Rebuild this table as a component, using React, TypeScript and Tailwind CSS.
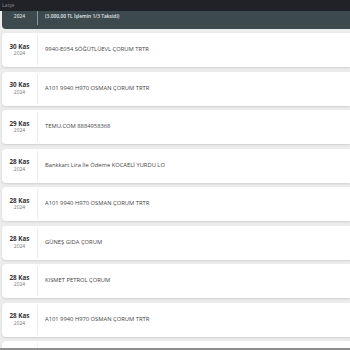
import React from "react";

const rows = [
  { d: "30 Kas", t: "9940-E054 SÖĞÜTLÜEVL ÇORUM TRTR" },
  { d: "30 Kas", t: "A101 9940 H970 OSMAN ÇORUM TRTR" },
  { d: "29 Kas", t: "TEMU.COM 8884958368" },
  { d: "28 Kas", t: "Bankkart Lira İle Ödeme KOCAELİ YURDU LO" },
  { d: "28 Kas", t: "A101 9940 H970 OSMAN ÇORUM TRTR" },
  { d: "28 Kas", t: "GÜNEŞ GIDA ÇORUM" },
  { d: "28 Kas", t: "KISMET PETROL ÇORUM" },
  { d: "28 Kas", t: "A101 9940 H970 OSMAN ÇORUM TRTR" },
];

export default function App() {
  return (
    <div
      className="relative w-[350px] h-[350px] overflow-hidden bg-[#ececec] flex flex-col"
      style={{ fontFamily: '"Open Sans", "Liberation Sans", sans-serif' }}
    >
      <div className="h-[11px] shrink-0 bg-[#202228] flex items-center px-[2px]">
        <span className="text-[5px] leading-none text-[#8a8c90]">Latşe</span>
      </div>
      <div className="h-[18px] shrink-0 ml-[2px] bg-[#3d4a4d] rounded-bl-[4px] flex items-stretch">
        <div className="w-[35px] flex items-start justify-center pt-[2px] text-[5px] text-[#d6dadb] font-semibold">
          2024
        </div>
        <div className="w-px h-[14px] bg-[#8b9698]" />
        <div className="pl-[7px] pt-[3px] text-[4.9px] text-[#e2e6e7] font-semibold leading-none">
          (3.000,00 TL İşlemin 1/3 Taksidi)
        </div>
      </div>
      <div className="flex flex-col gap-[4.5px] pt-[4px] pl-[2px]">
        {rows.map((r, i) => (
          <div
            key={i}
            className="h-[34px] shrink-0 bg-white rounded-l-[4px] shadow-[0_1px_2px_rgba(0,0,0,0.12)] flex items-center"
          >
            <div className="w-[35px] flex flex-col items-center justify-center leading-none">
              <span className="text-[6.3px] font-bold text-[#333]">{r.d}</span>
              <span className="text-[5px] text-[#777] mt-[1px]">2024</span>
            </div>
            <div className="w-px self-stretch my-[2px] bg-[#ededed]" />
            <div className="pl-[7px] text-[5.8px] text-[#444] leading-none">{r.t}</div>
          </div>
        ))}
        <div className="h-[34px] shrink-0 bg-white rounded-l-[4px] shadow-[0_1px_2px_rgba(0,0,0,0.12)] flex items-center">
          <div className="w-[35px]" />
          <div className="w-px self-stretch my-[2px] bg-[#ededed]" />
        </div>
      </div>
      <div className="absolute left-0 right-0 bottom-0 h-[2px] bg-[#8f8f8f]" />
    </div>
  );
}
